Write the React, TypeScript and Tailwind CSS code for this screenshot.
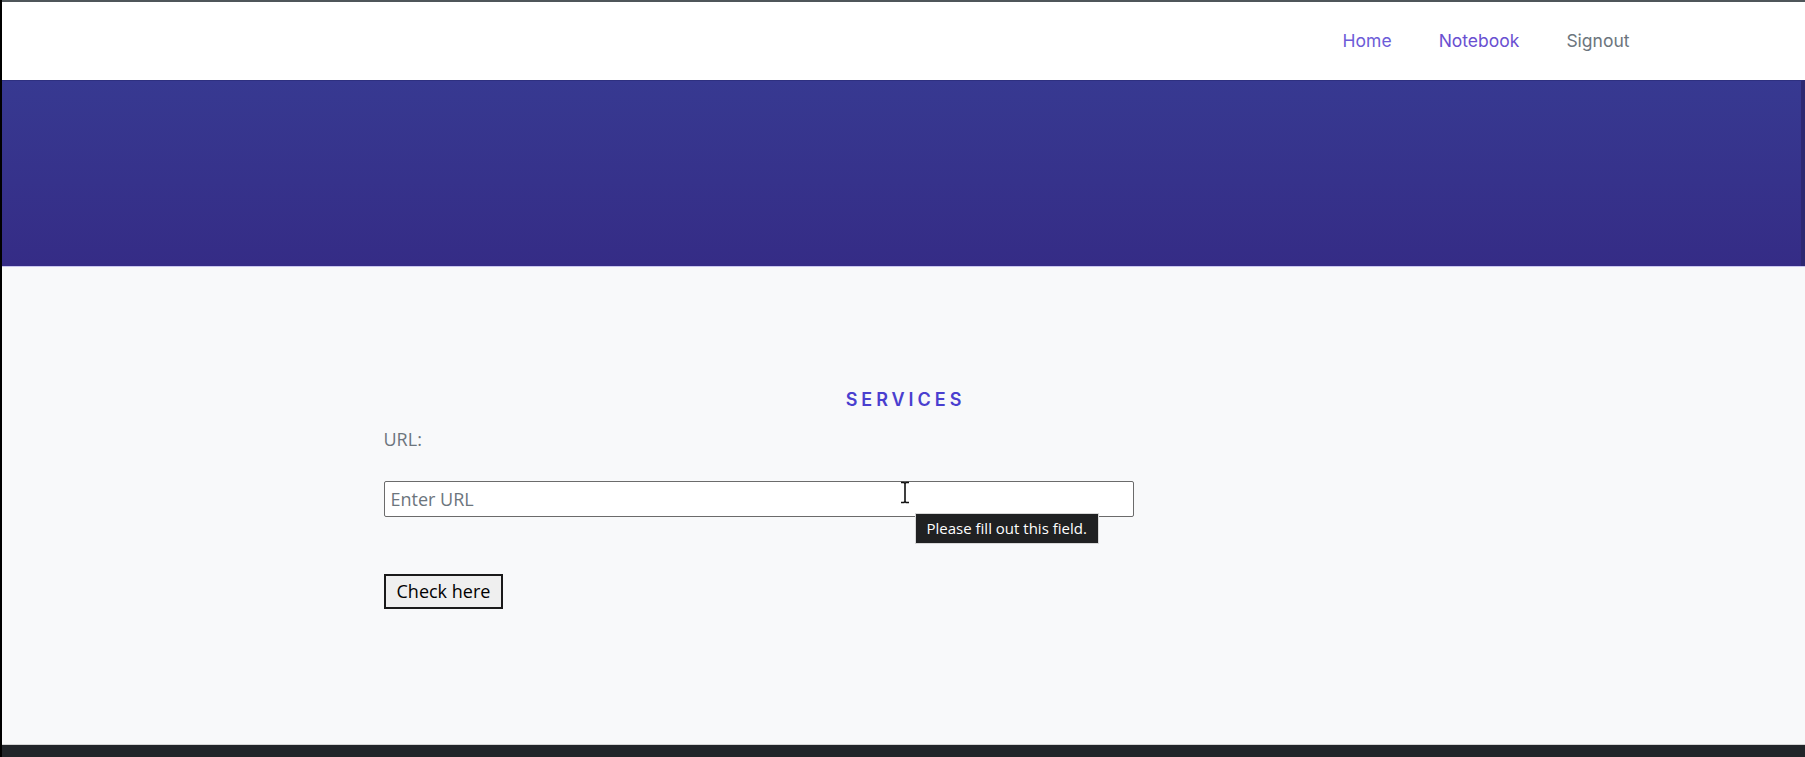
import { useState } from 'react';

const navLinks = [
  { label: 'Home', color: 'text-[#6c5cd8]' },
  { label: 'Notebook', color: 'text-[#6a4fd1]' },
  { label: 'Signout', color: 'text-[#6c757d]' },
];

function IBeam() {
  return (
    <svg width="12" height="23" viewBox="0 0 12 23" className="absolute left-[515px] top-0 pointer-events-none">
      <path d="M2 1.5h3l1 1 1-1h3M6 2.5v18M2 21.5h3l1-1 1 1h3" stroke="#111" strokeWidth="1.6" fill="none" />
    </svg>
  );
}

export default function App() {
  const [url, setUrl] = useState('');

  return (
    <div className="min-h-screen flex flex-col border-l-2 border-black bg-[#f8f9fa]">
      {/* top edge */}
      <div className="h-[2px] bg-[#4f565a]" />

      {/* Navbar */}
      <nav className="h-[78px] bg-white flex items-center justify-end pr-[152px] font-['Inter',sans-serif] text-[17.5px]">
        {navLinks.map(l => (
          <a key={l.label} href="#" className={`px-[23.5px] pt-[1px] ${l.color}`}>
            {l.label}
          </a>
        ))}
      </nav>

      {/* Banner */}
      <header className="h-[186px] bg-gradient-to-b from-[#373991] to-[#352c86] border-t border-[#2e3080] border-r-[4px] border-r-[#2d2871]" />

      {/* Services */}
      <main className="h-[478px] pt-[119px] border-t border-[#c9c6ef]">
        <div className="w-[1140px] mx-auto">
          <h2 className="text-center font-['Inter',sans-serif] font-semibold text-[18px] leading-[27px] tracking-[0.22em] text-[#4a3fcf] pl-[4px]">
            SERVICES
          </h2>
          <form className="pl-[50px] mt-[13px] font-['Open_Sans',sans-serif]" onSubmit={e => e.preventDefault()}>
            <label className="block text-[18px] leading-[27px] text-[#6c757d]">URL:</label>
            <div className="relative w-[750px] mt-[28px]">
              <input
                value={url}
                onChange={e => setUrl(e.target.value)}
                placeholder="Enter URL"
                className="w-full h-[36px] bg-white border border-[#6b6b6b] rounded-[2px] px-[6px] text-[18px] text-[#333] placeholder:text-[#6c757d] outline-none"
              />
              <IBeam />
              <div className="absolute left-[531px] top-[32px] h-[31px] px-[11px] flex items-center bg-[#202122] border border-[#d8d8d8] text-white text-[15px] font-['Open_Sans',sans-serif] whitespace-nowrap">
                Please fill out this field.
              </div>
            </div>
            <button
              type="submit"
              className="mt-[57px] h-[35px] px-[11px] border-2 border-[#1a1a1a] bg-[#efefef] text-[18px] text-black"
            >
              Check here
            </button>
          </form>
        </div>
      </main>

      {/* Footer */}
      <footer className="flex-1 min-h-[13px] bg-[#212529] border-t border-[#d4d4d4]" />
    </div>
  );
}
